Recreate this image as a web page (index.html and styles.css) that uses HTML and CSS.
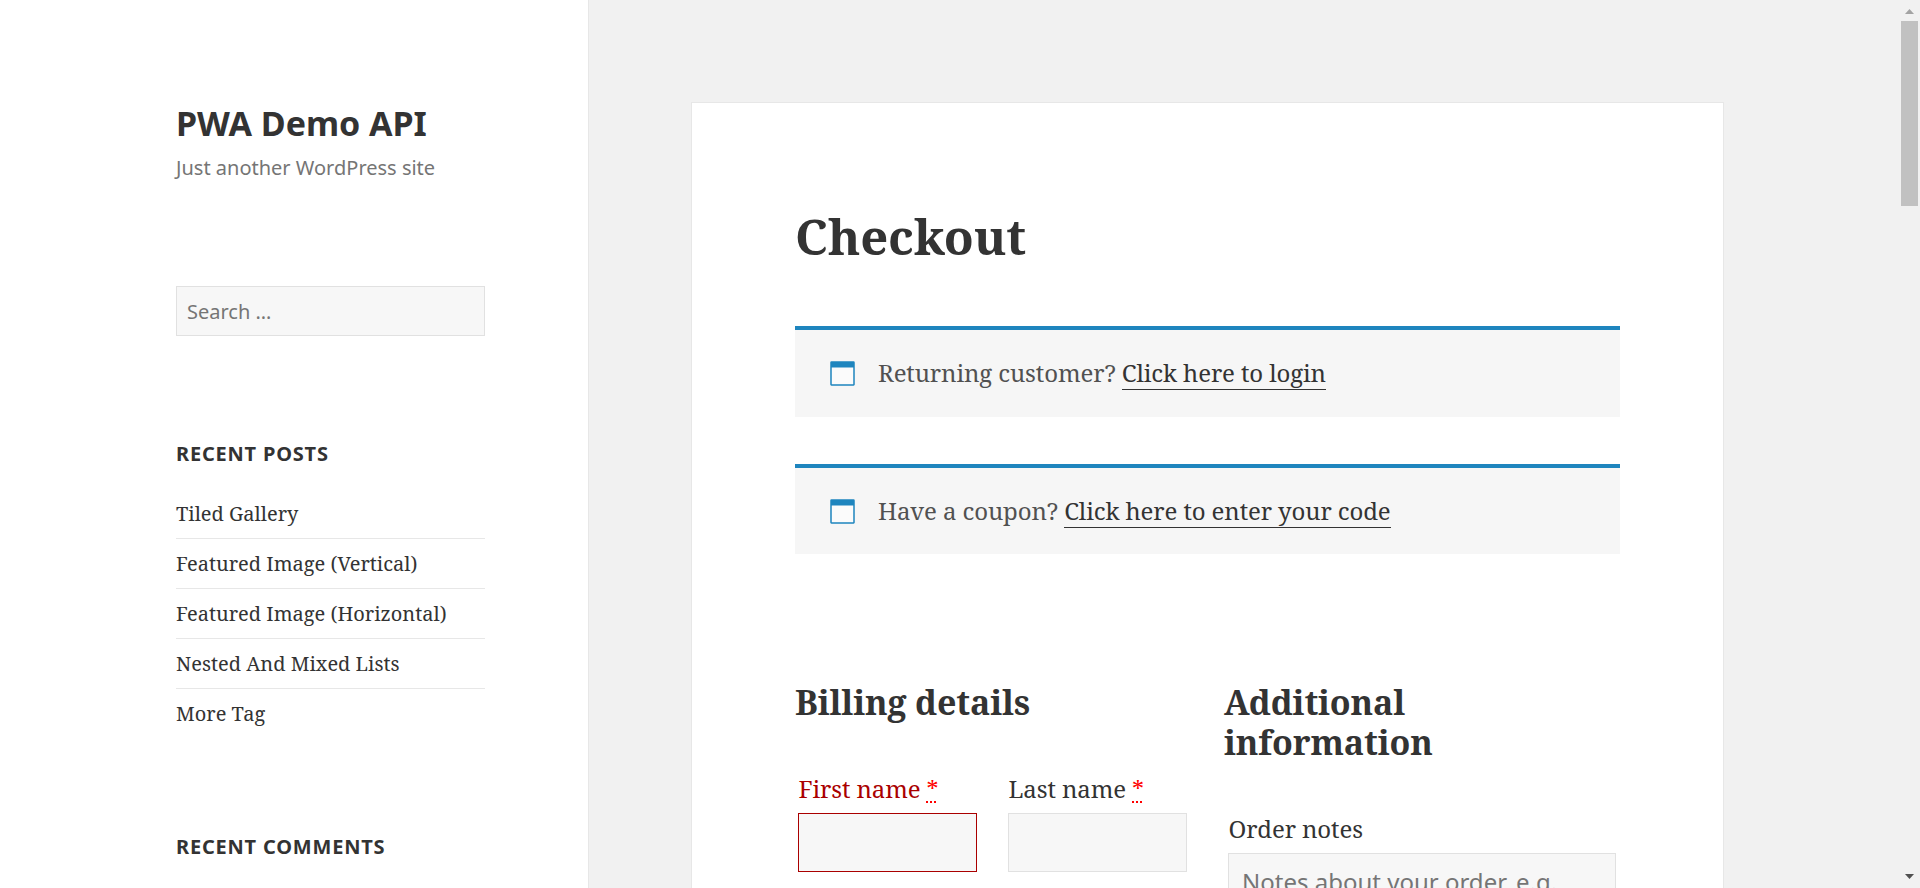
FILE: index.html
```html
<!DOCTYPE html>
<html lang="en">
<head>
<meta charset="utf-8">
<title>Checkout – PWA Demo API</title>
<link rel="stylesheet" href="styles.css">
</head>
<body>
<div class="page">
  <aside class="sidebar">
    <h1 class="site-title">PWA Demo API</h1>
    <p class="tagline">Just another WordPress site</p>
    <input class="search" type="text" placeholder="Search …" aria-label="Search">
    <h2 class="widget-title">Recent Posts</h2>
    <ul class="posts">
      <li><a>Tiled Gallery</a></li>
      <li><a>Featured Image (Vertical)</a></li>
      <li><a>Featured Image (Horizontal)</a></li>
      <li><a>Nested And Mixed Lists</a></li>
      <li><a>More Tag</a></li>
    </ul>
    <h2 class="widget-title comments">Recent Comments</h2>
  </aside>
  <main class="main">
    <article class="card">
      <h1 class="entry-title">Checkout</h1>
      <div class="notice">
        <svg class="icon" width="25" height="25" viewBox="0 0 25 25"><rect x="1" y="1" width="23" height="23" rx=".4" fill="#fff" fill-opacity=".5" stroke="#1e85be" stroke-width="1.5"/><path d="M1 1h23v5.500H1z" fill="#1e85be"/></svg>
        <p>Returning customer? <a>Click here to login</a></p>
      </div>
      <div class="notice coupon">
        <svg class="icon" width="25" height="25" viewBox="0 0 25 25"><rect x="1" y="1" width="23" height="23" rx=".4" fill="#fff" fill-opacity=".5" stroke="#1e85be" stroke-width="1.5"/><path d="M1 1h23v5.500H1z" fill="#1e85be"/></svg>
        <p>Have a coupon? <a>Click here to enter your code</a></p>
      </div>
      <div class="columns">
        <section class="billing">
          <h3>Billing details</h3>
          <div class="names">
            <div class="field invalid"><label>First name <abbr>*</abbr></label><input type="text" aria-label="First name"></div>
            <div class="field"><label>Last name <abbr>*</abbr></label><input type="text" aria-label="Last name"></div>
          </div>
        </section>
        <section class="additional">
          <h3>Additional<br>information</h3>
          <div class="field notes"><label>Order notes</label><textarea placeholder="Notes about your order, e.g. special notes for delivery."></textarea></div>
        </section>
      </div>
    </article>
  </main>
  <div class="scrollbar">
    <svg class="arrow" width="17" height="17" viewBox="0 0 17 17"><path d="M4 14h9L8.500 9z" fill="#a3a3a3"/></svg>
    <div class="thumb"></div>
    <svg class="arrow" width="17" height="17" viewBox="0 0 17 17"><path d="M4 3h9L8.500 8z" fill="#505050"/></svg>
  </div>
</div>
</body>
</html>
```
FILE: styles.css
```css
* { box-sizing: border-box; }
body { margin: 0; overflow: hidden; background: #f1f1f1; color: #333; font-family: "Noto Serif", "DejaVu Serif", serif; }
h1, h2, h3, p, ul { margin: 0; padding: 0; }
.page { display: flex; height: 888px; overflow: hidden; }
.sidebar { width: 589px; flex: none; padding: 102px 103px 0 176px; background: #fff; border-right: 1px solid #e7e7e7; }
.site-title { font: bold 34px/43px "Noto Sans", sans-serif; letter-spacing: -.05px; white-space: nowrap; }
.tagline { margin-top: 7px; font: 20px/32px "Noto Sans", sans-serif; color: #757575; white-space: nowrap; }
.search { display: block; width: 309px; height: 50px; margin-top: 102px; padding: 1px 10px 0; border: 1px solid #e1e1e1; border-radius: 0; background: #f7f7f7; font: 20px "Noto Sans", sans-serif; }
::placeholder { color: #757575; opacity: 1; }
.widget-title { margin-top: 103px; font: bold 20px/30px "Noto Sans", sans-serif; letter-spacing: .04em; text-transform: uppercase; white-space: nowrap; }
.posts { margin-top: 20px; list-style: none; }
.posts li { height: 50px; border-bottom: 1px solid #e7e7e7; font-size: 20px; line-height: 50px; white-space: nowrap; }
.posts li:last-child { border: 0; }
.comments { margin-top: 93px; }
.main { flex: 1; padding: 102px 0 0 102px; }
.card { width: 1033px; height: 900px; padding: 100px 103px 0 103px; border: 1px solid #e7e7e7; background: #fff; }
.entry-title { font-size: 49px; line-height: 66px; letter-spacing: -.15px; white-space: nowrap; }
.notice { display: flex; align-items: flex-start; height: 91px; margin-bottom: 47px; padding: 31px 0 0 35px; border-top: 4px solid #1e85be; background: #f6f6f6; color: #515151; font-size: 24px; letter-spacing: -.11px; white-space: nowrap; }
.entry-title + .notice { margin-top: 57px; }
.coupon { height: 90px; }
.notice .icon { flex: none; margin-right: 23px; }
.notice p { line-height: 24px; }
.notice a { color: #333; border-bottom: 1px solid #333; }
.columns { display: flex; justify-content: space-between; margin-top: 128px; }
.billing { width: 396px; }
.additional { width: 396px; }
h3 { font-size: 34px; line-height: 40px; letter-spacing: -.15px; white-space: nowrap; }
.names { display: flex; gap: 31px; padding-left: 3px; margin-top: 46px; }
.field { width: 179px; font-size: 24px; letter-spacing: -.12px; white-space: nowrap; }
.field label { display: block; padding-left: .5px; line-height: 42px; }
.field input, .field textarea { display: block; width: 100%; height: 59px; margin-top: 3px; border: 1px solid #e1e1e1; border-radius: 0; background: #f7f7f7; }
.invalid label { color: #a00; }
.field.invalid input { border-color: #a00; }
.field abbr { color: red; text-decoration: underline dotted 2px; text-underline-offset: 3px; }
.notes { width: 388px; margin: 46px 0 0 4px; }
.field textarea { height: 180px; padding: 10px 13px; resize: none; overflow: hidden; white-space: pre-wrap; font: 24px/36px "Noto Sans", sans-serif; }
.scrollbar { display: flex; flex-direction: column; width: 19px; height: 888px; padding-right: 2px; background: #f1f1f1; }
.arrow { flex: none; }
.thumb { height: 185px; margin-top: 4px; background: #c1c1c1; }
.thumb + .arrow { margin-top: auto; }
```
